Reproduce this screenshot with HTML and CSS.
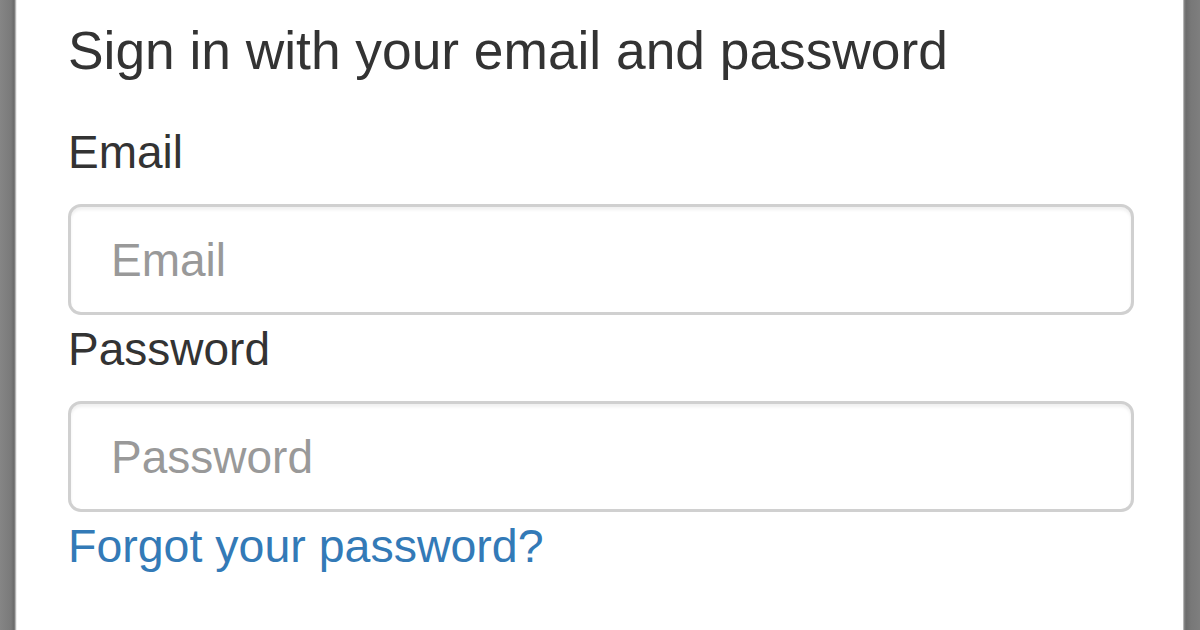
FILE: index.html
```html
<!DOCTYPE html>
<html lang="en">
<head>
<meta charset="utf-8">
<title>Sign in</title>
<link rel="stylesheet" href="styles.css">
</head>
<body>
<div class="frame">
  <div class="edge edge-left"></div>
  <main class="panel">
    <h2 class="title">Sign in with your email and password</h2>
    <form class="form">
      <label class="label" for="email">Email</label>
      <input class="field" id="email" type="text" placeholder="Email">
      <label class="label label-pw" for="password">Password</label>
      <input class="field" id="password" type="password" placeholder="Password">
      <a class="link" href="#">Forgot your password?</a>
    </form>
  </main>
  <div class="edge edge-right"></div>
</div>
</body>
</html>
```
FILE: styles.css
```css
html, body {
  margin: 0;
  padding: 0;
  height: 100%;
  background: #ffffff;
}
.frame {
  display: flex;
  width: 1200px;
  height: 630px;
  overflow: hidden;
}
.edge {
  width: 17px;
  flex: 0 0 17px;
}
.edge-left {
  background: linear-gradient(to right, #858585 0, #7a7a7a 11px, #6a6a6a 14px, #8c8c8c 15px, #dcdcdc 16px, #ffffff 17px);
}
.edge-right {
  background: linear-gradient(to right, #e0e0e0 0, #8a8a8a 1px, #6c6c6c 3px, #787878 8px, #7e7e7e 17px);
}
.panel {
  flex: 1;
  background: #ffffff;
  padding: 21px 49px 0 51px;
  font-family: "Liberation Sans", Arial, Helvetica, sans-serif;
  color: #333333;
}
.title {
  margin: 0;
  font-size: 53.3px;
  line-height: 60px;
  font-weight: normal;
  color: #333333;
}
.form {
  display: flex;
  flex-direction: column;
  margin-top: 46px;
}
.label {
  font-size: 46px;
  line-height: 50px;
  margin-bottom: 27px;
}
.label-pw {
  margin-top: 9px;
}
.field {
  box-sizing: border-box;
  width: 100%;
  height: 111px;
  border: 3px solid #d0d0d0;
  border-radius: 13px;
  padding: 0 0 0 40px;
  font-family: "Liberation Sans", Arial, Helvetica, sans-serif;
  font-size: 46px;
  color: #555555;
  background: #ffffff;
  box-shadow: inset 0 3px 3px rgba(0, 0, 0, 0.06);
  outline: none;
}
.field::placeholder {
  color: #999999;
}
.link {
  margin-top: 9px;
  font-size: 46.5px;
  line-height: 50px;
  color: #337ab7;
  text-decoration: none;
  align-self: flex-start;
}
```
